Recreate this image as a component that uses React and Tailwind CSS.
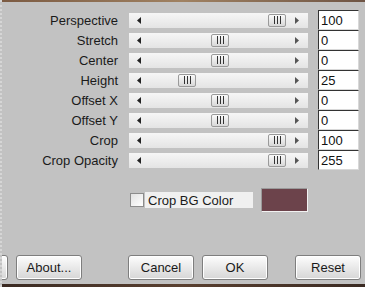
import React from 'react';

const rows = [
  { label: 'Perspective', value: '100', thumb: 139 },
  { label: 'Stretch', value: '0', thumb: 82 },
  { label: 'Center', value: '0', thumb: 82 },
  { label: 'Height', value: '25', thumb: 49 },
  { label: 'Offset X', value: '0', thumb: 82 },
  { label: 'Offset Y', value: '0', thumb: 82 },
  { label: 'Crop', value: '100', thumb: 139 },
  { label: 'Crop Opacity', value: '255', thumb: 139 },
];

const Arrow = ({ dir }) => (
  <svg width="4" height="7" viewBox="0 0 4 7" className="shrink-0">
    {dir === 'left' ? <path d="M4 0 L0 3.5 L4 7 Z" fill="#222" /> : <path d="M0 0 L4 3.5 L0 7 Z" fill="#555" />}
  </svg>
);

const SliderRow = ({ label, value, thumb }) => (
  <div className="flex items-center h-[20px]">
    <span className="w-[118px] text-right text-[13px] text-[#1a1a1a] leading-none">{label}</span>
    {/* track */}
    <div className="relative ml-[11px] w-[179px] h-[15px] bg-gradient-to-b from-[#f6f6f6] to-[#e4e4e4] flex items-center justify-between pl-[8px] pr-[9px]">
      <Arrow dir="left" />
      <Arrow dir="right" />
      <div
        className="absolute top-[1px] h-[13px] w-[18px] rounded-[2px] border border-[#9a9a9a] bg-gradient-to-b from-[#fafafa] to-[#d8d8d8] flex items-center justify-center gap-[2px]"
        style={{ left: thumb }}
      >
        <span className="w-[1px] h-[8px] bg-[#333]" />
        <span className="w-[1px] h-[8px] bg-[#333]" />
        <span className="w-[1px] h-[8px] bg-[#333]" />
      </div>
    </div>
    <div className="ml-[10px] w-[41px] h-[20px] bg-white border-t border-l border-[#333] border-r border-b border-r-[#d8d8d8] border-b-[#d8d8d8] pl-[2px] flex items-center text-[13px] text-[#111] leading-none">
      {value}
    </div>
  </div>
);

const Btn = ({ children, className = '' }) => (
  <button className={`h-[25px] w-[66px] shrink-0 rounded-[3px] border border-[#7e7e7e] bg-gradient-to-b from-[#fdfdfd] to-[#d6d6d6] shadow-[inset_0_0_0_1px_#ffffff] text-[13px] text-[#1a1a1a] leading-none ${className}`}>
    {children}
  </button>
);

export default function App() {
  return (
    <div
      className="w-[365px] h-[287px] overflow-hidden bg-[#c2c2c2] flex flex-col border-l-2 border-dotted border-[#d6d6d6]"
      style={{ fontFamily: '"Liberation Sans", Arial, sans-serif' }}
    >
      <div className="h-[2px] -ml-[2px] bg-gradient-to-r from-[#7b5a42] via-[#a08262] to-[#6e5444]" />

      <div className="pt-[8px] -ml-[2px] flex flex-col">
        {rows.map((r) => (
          <SliderRow key={r.label} {...r} />
        ))}
      </div>

      {/* crop bg colour */}
      <div className="mt-[18px] -ml-[2px] h-[24px] flex items-center pl-[130px]">
        <div className="w-[14px] h-[14px] border border-[#8c8c8c] bg-gradient-to-br from-[#e2e2e2] to-[#ffffff]" />
        <div className="ml-[1px] w-[108px] h-[16px] bg-[#f0f0f0] flex items-center pl-[3px] text-[13px] text-[#1a1a1a] leading-none">
          Crop BG Color
        </div>
        <div className="ml-[8px] w-[47px] h-[24px] bg-[#6c434b] border border-[#f2f2f2] border-t-[#9a9a9a] border-l-[#9a9a9a]" />
      </div>

      {/* buttons */}
      <div className="mt-[43px] -ml-[2px] flex items-center">
        <Btn className="-ml-[58px]">&nbsp;</Btn>
        <Btn className="ml-[8px]">About...</Btn>
        <Btn className="ml-[46px]">Cancel</Btn>
        <Btn className="ml-[8px] w-[65px]">OK</Btn>
        <Btn className="ml-[27px]">Reset</Btn>
      </div>

      <div className="mt-auto -ml-[2px] h-[3px] bg-gradient-to-r from-[#3a2a22] via-[#5a4030] to-[#3a2a22]" />
    </div>
  );
}
